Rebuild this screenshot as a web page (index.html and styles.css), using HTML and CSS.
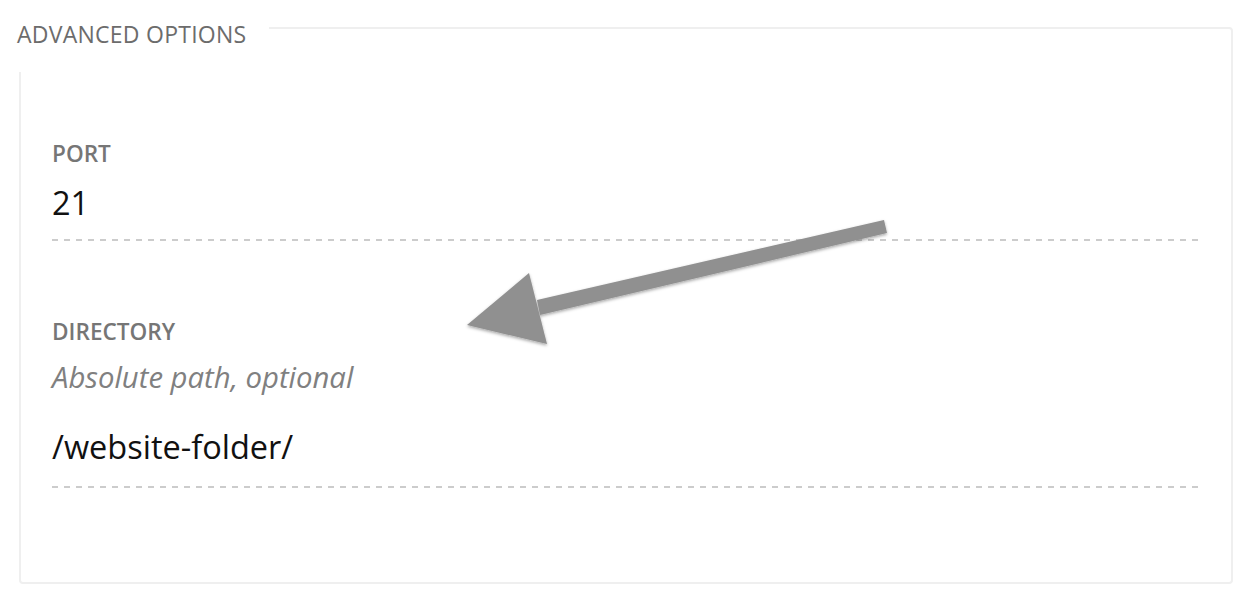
FILE: index.html
```html
<!DOCTYPE html>
<html>
<head>
<meta charset="utf-8">
<link rel="stylesheet" href="styles.css">
</head>
<body>
<section class="panel">
  <div class="legend">ADVANCED OPTIONS</div>
  <div class="field field-port">
    <div class="label">PORT</div>
    <div class="value">21</div>
    <div class="rule"></div>
  </div>
  <div class="field field-dir">
    <div class="label">DIRECTORY</div>
    <div class="hint">Absolute path, optional</div>
    <div class="value value-dir">/website-folder/</div>
    <div class="rule rule-dir"></div>
  </div>
  <svg class="arrow" width="460" height="160" viewBox="440 200 460 160">
    <defs>
      <filter id="sh" x="-10%" y="-20%" width="120%" height="150%">
        <feDropShadow dx="0" dy="1.5" stdDeviation="1.5" flood-color="#000" flood-opacity="0.35"/>
      </filter>
    </defs>
    <g filter="url(#sh)" fill="#909090">
      <polygon points="884,220 887,233 540,315 537,300"/>
      <polygon points="467,325 529,273 547,344"/>
    </g>
  </svg>
</section>
</body>
</html>
```

FILE: styles.css
```css
html, body {
  margin: 0;
  padding: 0;
  background: #ffffff;
}

body {
  font-family: "Open Sans", "Noto Sans", sans-serif;
  width: 1246px;
  height: 598px;
  overflow: hidden;
}

.panel {
  position: relative;
  box-sizing: border-box;
  margin: 27px 0 0 19px;
  width: 1214px;
  height: 557px;
  border: 2px solid #efefef;
  border-radius: 4px;
  padding: 114px 31px 0 31px;
}

.legend {
  position: absolute;
  left: -21px;
  top: -29px;
  width: 252px;
  height: 49px;
  padding: 23px 0 0 17px;
  box-sizing: content-box;
  background: #ffffff;
  font-size: 23px;
  line-height: 22px;
  color: #6c6c6c;
  letter-spacing: 0.25px;
}

.field {
  display: flex;
  flex-direction: column;
}

.label {
  font-size: 22.6px;
  line-height: 22px;
  color: #767676;
  font-weight: 600;
}

.value {
  margin-top: 22px;
  font-size: 32.5px;
  line-height: 32px;
  color: #111111;
}

.hint {
  margin-top: 20px;
  font-size: 29.3px;
  line-height: 29px;
  font-style: italic;
  color: #808080;
}

.value-dir {
  margin-top: 39px;
}

.rule {
  margin-top: 20px;
  height: 2px;
  background: repeating-linear-gradient(to right, #cccccc 0 6px, transparent 6px 12px);
}

.rule-dir {
  margin-top: 23px;
}

.field-dir {
  margin-top: 80px;
}

.arrow {
  position: absolute;
  left: 419px;
  top: 171px;
}
```
